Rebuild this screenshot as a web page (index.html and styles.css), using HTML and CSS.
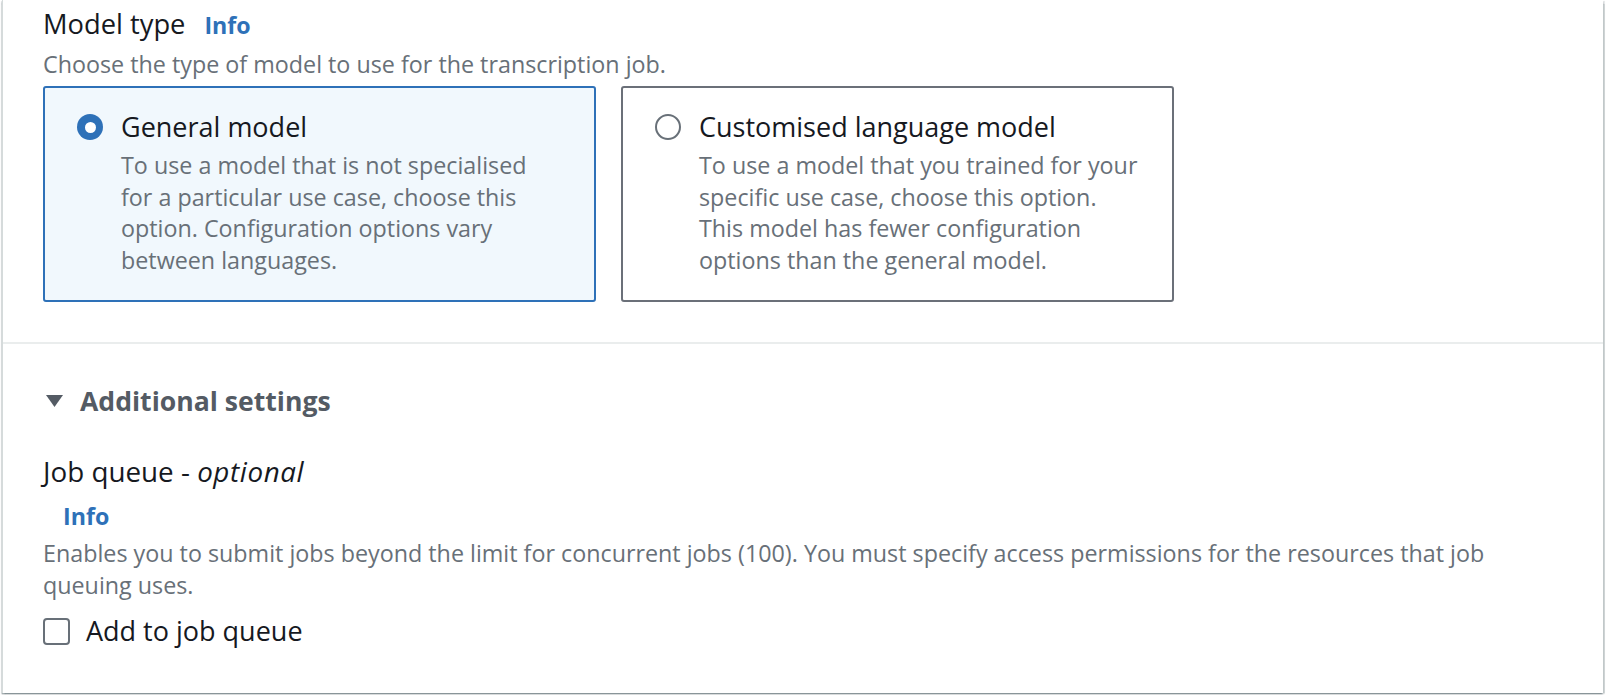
FILE: index.html
```html
<!DOCTYPE html>
<html lang="en">
<head>
<meta charset="utf-8">
<title>Model type</title>
<link rel="stylesheet" href="styles.css">
</head>
<body>
<div class="panel">
  <section class="section">
    <div class="field-head">
      <span class="field-label">Model type</span>
      <a class="info">Info</a>
    </div>
    <p class="field-desc">Choose the type of model to use for the transcription job.</p>
    <div class="tiles">
      <div class="tile tile-selected">
        <span class="radio radio-on"></span>
        <div class="tile-body">
          <div class="tile-title">General model</div>
          <div class="tile-desc">To use a model that is not specialised<br>for a particular use case, choose this<br>option. Configuration options vary<br>between languages.</div>
        </div>
      </div>
      <div class="tile">
        <span class="radio"></span>
        <div class="tile-body">
          <div class="tile-title">Customised language model</div>
          <div class="tile-desc">To use a model that you trained for your<br>specific use case, choose this option.<br>This model has fewer configuration<br>options than the general model.</div>
        </div>
      </div>
    </div>
  </section>
  <section class="section section-extra">
    <div class="expander">
      <svg class="caret" width="17" height="12" viewBox="0 0 17 12"><path d="M0 0 H17 L8.5 12 Z" fill="#545b64"/></svg>
      <span class="expander-title">Additional settings</span>
    </div>
    <div class="job-label">Job queue - <em>optional</em></div>
    <a class="info info-block">Info</a>
    <p class="field-desc">Enables you to submit jobs beyond the limit for concurrent jobs (100). You must specify access permissions for the resources that job<br>queuing uses.</p>
    <label class="check-row">
      <span class="checkbox"></span>
      <span class="check-label">Add to job queue</span>
    </label>
  </section>
</div>
</body>
</html>
```
FILE: styles.css
```css
html, body {
  margin: 0;
  padding: 0;
  background: #ffffff;
}
body {
  font-family: "Open Sans", "Noto Sans", sans-serif;
  color: #16191f;
  padding: 0 3px 3px 2px;
}
.panel {
  background: #ffffff;
  box-shadow: 0 1.5px 1.5px 0 rgba(0, 28, 36, 0.35), 1.5px 1px 1px 0 rgba(0, 28, 36, 0.18), -1.5px 1px 1px 0 rgba(0, 28, 36, 0.18);
  border-left: 1px solid #d5dbdb;
}
.section {
  padding: 6px 40px 40px 40px;
}
.field-head {
  display: flex;
  align-items: baseline;
  gap: 19px;
  line-height: 36px;
}
.field-label {
  font-size: 27.3px;
  color: #16191f;
}
.info {
  font-size: 23.2px;
  font-weight: 700;
  color: #2e71b8;
}
.field-desc {
  margin: 5px 0 0 0;
  font-size: 23.3px;
  line-height: 32px;
  color: #687078;
}
.tiles {
  display: flex;
  gap: 25px;
  margin-top: 6px;
}
.tile {
  width: 553px;
  box-sizing: border-box;
  border: 2px solid #6b7079;
  border-radius: 3px;
  padding: 23px 26px 24px 32px;
  display: flex;
  gap: 18px;
  align-items: flex-start;
}
.tile-selected {
  border-color: #2e71b8;
  background: #f1f8fd;
}
.radio {
  flex: none;
  width: 26px;
  height: 26px;
  box-sizing: border-box;
  border-radius: 50%;
  border: 2px solid #687078;
  background: #ffffff;
  margin-top: 3px;
  display: flex;
  align-items: center;
  justify-content: center;
}
.radio-on {
  border: none;
  background: #2e71b8;
}
.radio-on::after {
  content: "";
  width: 11px;
  height: 11px;
  border-radius: 50%;
  background: #ffffff;
}
.tile-title {
  font-size: 27px;
  line-height: 32px;
  color: #16191f;
}
.tile-desc {
  margin-top: 7px;
  font-size: 23.3px;
  line-height: 31.5px;
  color: #687078;
}
.section-extra {
  border-top: 2px solid #eaeded;
  padding-top: 41px;
  padding-bottom: 46px;
}
.expander {
  display: flex;
  align-items: center;
  gap: 17px;
  padding-left: 3px;
  line-height: 32px;
}
.caret {
  display: block;
}
.expander-title {
  font-size: 26.6px;
  font-weight: 700;
  color: #545b64;
}
.job-label {
  margin-top: 38px;
  font-size: 27.8px;
  line-height: 32px;
}
.job-label em {
  font-style: italic;
  letter-spacing: 0.6px;
}
.info-block {
  display: block;
  margin-top: 13px;
  padding-left: 20px;
  line-height: 32px;
}
.section-extra .field-desc {
  margin-top: 5px;
  line-height: 32px;
}
.check-row {
  display: flex;
  align-items: center;
  gap: 16px;
  margin-top: 14px;
  line-height: 32px;
}
.checkbox {
  width: 27px;
  height: 27px;
  box-sizing: border-box;
  border: 2px solid #687078;
  border-radius: 4px;
  background: #ffffff;
}
.check-label {
  font-size: 27px;
}
```
